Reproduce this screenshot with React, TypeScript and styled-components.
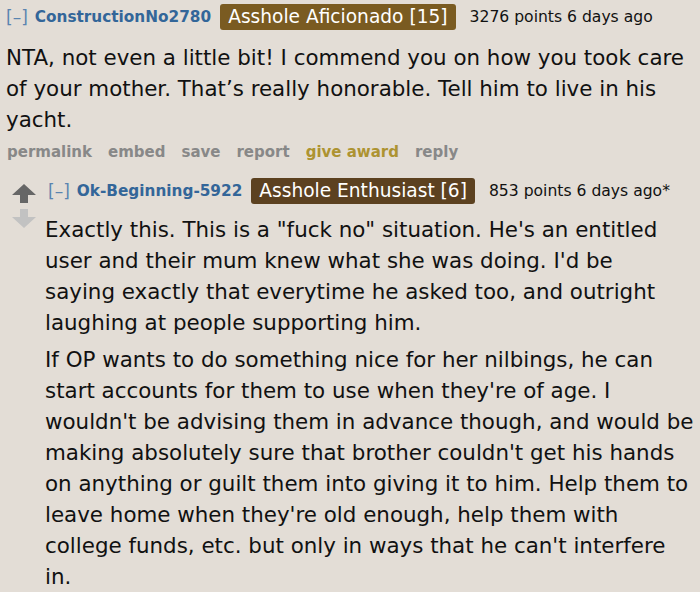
import React from "react";
import styled, { createGlobalStyle } from "styled-components";

const Global = createGlobalStyle`
  html, body { margin: 0; padding: 0; background: #e3ddd6; }
  body { font-family: "DejaVu Sans", Verdana, sans-serif; color: #111; }
`;

const Page = styled.div`
  width: 700px;
  height: 592px;
  overflow: hidden;
  padding: 4px 0 0 6px;
  box-sizing: border-box;
`;

const Header = styled.div<{ $indent?: number }>`
  display: flex;
  align-items: center;
  gap: 9px;
  height: 26px;
  padding-left: ${(p) => p.$indent ?? 0}px;
`;

const Toggle = styled.span`
  color: #5a84b0;
  font-size: 17px;
  font-weight: normal;
`;

const Author = styled.span`
  color: #336699;
  font-size: 15.3px;
  font-weight: bold;
  display: inline-flex;
  align-items: center;
  gap: 7px;
`;

const Flair = styled.span<{ $bg: string }>`
  background: ${(p) => p.$bg};
  color: #fff;
  font-size: 18.6px;
  line-height: 26px;
  padding: 0 8px;
  border-radius: 3px;
  margin-right: 5px;
`;

const Meta = styled.span`
  font-size: 15.6px;
  color: #111;
`;

const Body = styled.div<{ $top: number }>`
  font-size: 21.4px;
  line-height: 31px;
  margin-top: ${(p) => p.$top}px;
`;

const Para = styled.p`
  margin: 0;
  & + & {
    margin-top: 6px;
  }
`;

const Buttons = styled.div`
  display: flex;
  gap: 16px;
  margin-top: 2px;
  font-size: 15px;
  font-weight: bold;
  height: 30px;
  align-items: center;
  padding-left: 1px;
`;

const Btn = styled.span<{ $gold?: boolean }>`
  color: ${(p) => (p.$gold ? "#ad9331" : "#888")};
`;

const Child = styled.div`
  display: flex;
  gap: 4px;
  margin-top: 11px;
`;

const Votes = styled.div`
  display: flex;
  flex-direction: column;
  align-items: center;
  gap: 6px;
  width: 35px;
  padding-top: 6px;
`;

const ChildMain = styled.div`
  flex: 1;
  min-width: 0;
  padding-right: 4px;
`;

const Arrow = ({ up, color }: { up?: boolean; color: string }) => (
  <svg width="24" height="19" viewBox="0 0 24 19" style={{ transform: up ? undefined : "rotate(180deg)" }}>
    <path d="M12 0 L24 11 L16 11 L16 19 L8 19 L8 11 L0 11 Z" fill={color} />
  </svg>
);

export default function App() {
  return (
    <Page>
      <Global />
      <Header>
        <Author>
          <Toggle>[–]</Toggle>ConstructionNo2780
        </Author>
        <Flair $bg="#7a5b21">Asshole Aficionado [15]</Flair>
        <Meta>3276 points 6 days ago</Meta>
      </Header>
      <Body $top={12}>
        <Para>
          NTA, not even a little bit! I commend you on how you took care of your mother. That’s really honorable. Tell him to live in his yacht.
        </Para>
      </Body>
      <Buttons>
        <Btn>permalink</Btn>
        <Btn>embed</Btn>
        <Btn>save</Btn>
        <Btn>report</Btn>
        <Btn $gold>give award</Btn>
        <Btn>reply</Btn>
      </Buttons>
      <Child>
        <Votes>
          <Arrow up color="#666" />
          <Arrow color="#c2c2c2" />
        </Votes>
        <ChildMain>
          <Header $indent={3}>
            <Author>
              <Toggle>[–]</Toggle>Ok-Beginning-5922
            </Author>
            <Flair $bg="#5c4120">Asshole Enthusiast [6]</Flair>
            <Meta>853 points 6 days ago*</Meta>
          </Header>
          <Body $top={10}>
            <Para>
              Exactly this. This is a "fuck no" situation. He's an entitled user and their mum knew what she was doing. I'd be
              <br />
              saying exactly that everytime he asked too, and outright laughing at people supporting him.
            </Para>
            <Para>
              If OP wants to do something nice for her nilbings, he can start accounts for them to use when they're of age. I wouldn't be advising them in advance though, and would be making absolutely sure that brother couldn't get his hands on anything or guilt them into giving it to him. Help them to leave home when they're old enough, help them with college funds, etc. but only in ways that he can't interfere in.
            </Para>
          </Body>
        </ChildMain>
      </Child>
    </Page>
  );
}
